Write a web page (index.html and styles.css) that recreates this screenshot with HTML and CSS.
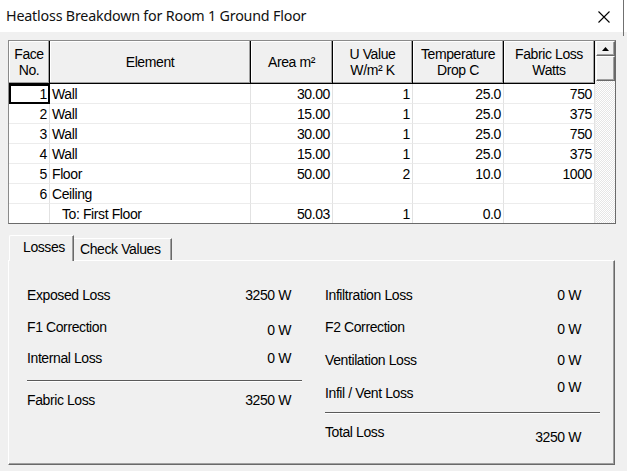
FILE: index.html
```html
<!DOCTYPE html>
<html lang="en">
<head>
<meta charset="utf-8">
<title>Heatloss Breakdown</title>
<link rel="stylesheet" href="styles.css">
</head>
<body>
<div class="window">
  <div class="titlebar">
    <span class="title">Heatloss Breakdown for Room 1 Ground Floor</span>
    <svg class="close" width="12" height="12" viewBox="0 0 12 12"><path d="M0.5 0.5 L11.5 11.5 M11.5 0.5 L0.5 11.5" stroke="#000" stroke-width="1.1" fill="none"/></svg>
  </div>

  <div class="client">
    <div class="grid">
      <div class="table">
        <div class="th">Face<br>No.</div>
        <div class="th">Element</div>
        <div class="th">Area m²</div>
        <div class="th">U Value<br>W/m² K</div>
        <div class="th">Temperature<br>Drop C</div>
        <div class="th">Fabric Loss<br>Watts</div>

        <div class="td num focus">1</div><div class="td">Wall</div><div class="td num">30.00</div><div class="td num">1</div><div class="td num">25.0</div><div class="td num">750</div>
        <div class="td num">2</div><div class="td">Wall</div><div class="td num">15.00</div><div class="td num">1</div><div class="td num">25.0</div><div class="td num">375</div>
        <div class="td num">3</div><div class="td">Wall</div><div class="td num">30.00</div><div class="td num">1</div><div class="td num">25.0</div><div class="td num">750</div>
        <div class="td num">4</div><div class="td">Wall</div><div class="td num">15.00</div><div class="td num">1</div><div class="td num">25.0</div><div class="td num">375</div>
        <div class="td num">5</div><div class="td">Floor</div><div class="td num">50.00</div><div class="td num">2</div><div class="td num">10.0</div><div class="td num">1000</div>
        <div class="td num">6</div><div class="td">Ceiling</div><div class="td num"></div><div class="td num"></div><div class="td num"></div><div class="td num"></div>
        <div class="td num last"></div><div class="td sub last">To: First Floor</div><div class="td num last">50.03</div><div class="td num last">1</div><div class="td num last">0.0</div><div class="td num last"></div>
      </div>
      <div class="vscroll">
        <div class="sbtn up"><svg width="7" height="4" viewBox="0 0 7 4"><path d="M3.5 0 L7 4 L0 4 Z" fill="#000"/></svg></div>
        <div class="sbtn thumb"></div>
        <div class="track"></div>
      </div>
    </div>

    <div class="tabs">
      <div class="tab active">Losses</div>
      <div class="tab">Check Values</div>
    </div>
    <div class="panel">
      <div class="col">
        <div class="pr"><span>Exposed Loss</span><span class="val">3250 W</span></div>
        <div class="pr gap12"><span>F1 Correction</span><span class="val low3">0 W</span></div>
        <div class="pr gap11"><span>Internal Loss</span><span class="val">0 W</span></div>
        <div class="rule gap12"></div>
        <div class="pr gap8"><span>Fabric Loss</span><span class="val">3250 W</span></div>
      </div>
      <div class="col right">
        <div class="pr"><span>Infiltration Loss</span><span class="val">0 W</span></div>
        <div class="pr gap12"><span>F2 Correction</span><span class="val low2">0 W</span></div>
        <div class="pr gap13"><span>Ventilation Loss</span><span class="val">0 W</span></div>
        <div class="pr gap13"><span>Infil / Vent Loss</span><span class="val high6">0 W</span></div>
        <div class="rule gap9"></div>
        <div class="pr gap8"><span>Total Loss</span><span class="val low5">3250 W</span></div>
      </div>
    </div>
  </div>
</div>
</body>
</html>
```

FILE: styles.css
```css
* { box-sizing: border-box; }

html, body {
  margin: 0;
  background: #f0f0f0;
}

body {
  font-family: "Liberation Sans", Arial, sans-serif;
  font-size: 14px;
  letter-spacing: -0.4px;
  color: #000;
}

.window {
  width: 627px;
  height: 471px;
  background: #f0f0f0;
}

/* caption */
.titlebar {
  position: relative;
  height: 32px;
  background: #fff;
  display: flex;
  align-items: center;
  padding-left: 6px;
}
.titlebar::after {
  content: "";
  position: absolute;
  right: 3px;
  top: 0;
  width: 1px;
  height: 36px;
  background: #707070;
}
.title {
  font-family: "Noto Sans", "Open Sans", sans-serif;
  font-size: 14.3px;
  letter-spacing: -0.2px;
  line-height: 20px;
  color: #111;
}
.close {
  margin-left: auto;
  margin-right: 17px;
  margin-top: 1px;
}

.client {
  padding: 8px 0 0 8px;
}

/* data grid */
.grid {
  display: flex;
  width: 608px;
  height: 184px;
  border: 1px solid #8a8a8a;
  border-right-color: #6a6a6a;
  border-bottom-color: #6a6a6a;
  background: #fff;
}
.table {
  display: grid;
  grid-template-columns: 41px 201px 82px 80px 91px 91px;
  grid-template-rows: 43px repeat(6, 20px) 19px;
}
.th {
  background: #f0f0f0;
  border-right: 1px solid #000;
  border-bottom: 1px solid #000;
  box-shadow: inset -1px -1px #a0a0a0, inset 1px 1px #fff;
  display: flex;
  align-items: center;
  justify-content: center;
  text-align: center;
  line-height: 16px;
  padding-bottom: 1px;
}
.td {
  border-right: 1px solid #e2e2e2;
  border-bottom: 1px solid #ececec;
  line-height: 19px;
  padding: 1px 2px 0 2px;
  white-space: nowrap;
  overflow: hidden;
}
.td.last { border-bottom: 0; }
.td.num { text-align: right; }
.td.sub { padding-left: 12px; }
.td.focus {
  outline: 2px solid #000;
  outline-offset: -2px;
}

.vscroll {
  width: 20px;
  display: flex;
  flex-direction: column;
  border-left: 1px solid #f0f0f0;
}
.sbtn {
  background: #f0f0f0;
  border: 1px solid;
  border-color: #fff #696969 #696969 #fff;
  box-shadow: inset -1px -1px #a0a0a0;
  display: flex;
  align-items: center;
  justify-content: center;
}
.sbtn.up { height: 15px; }
.sbtn.thumb { height: 25px; }
.track {
  flex: 1;
  background:
    conic-gradient(#fff 25%, #e6e6e6 0 50%, #fff 0 75%, #e6e6e6 0) 0 0 / 2px 2px;
}

/* tab strip */
.tabs {
  display: flex;
  align-items: flex-end;
  height: 36px;
  padding-left: 1px;
  position: relative;
  z-index: 1;
}
.tab {
  height: 22px;
  line-height: 20px;
  padding: 0 7px 0 6px;
  background: #f0f0f0;
  border-top: 1px solid #fff;
  border-right: 1px solid #696969;
  box-shadow: inset -1px 0 #a0a0a0;
}
.tab.active {
  height: 26px;
  margin-bottom: -1px;
  padding: 1px 8px 0 13px;
  border-left: 1px solid #fff;
  border-top-left-radius: 2px;
}
.tab + .tab { width: 98px; }

.panel {
  width: 607px;
  height: 205px;
  border: 1px solid;
  border-color: #fff #696969 #696969 #fff;
  box-shadow: inset -1px -1px #a0a0a0;
  display: flex;
  gap: 23px;
  padding: 24px 0 0 18px;
}
.col {
  width: 275px;
  display: flex;
  flex-direction: column;
}
.pr {
  display: flex;
  justify-content: space-between;
  align-items: flex-start;
  height: 20px;
  line-height: 20px;
  padding-right: 11px;
}
.col.right .pr { padding-right: 19px; }
.rule {
  height: 2px;
  border-top: 1px solid #5a5a5a;
  border-bottom: 1px solid #fff;
}
.gap8 { margin-top: 8px; }
.gap9 { margin-top: 9px; }
.gap11 { margin-top: 11px; }
.gap12 { margin-top: 12px; }
.gap13 { margin-top: 13px; }
.low2 { margin-top: 2px; }
.low3 { margin-top: 3px; }
.low5 { margin-top: 5px; }
.high6 { margin-top: -6px; }
```
